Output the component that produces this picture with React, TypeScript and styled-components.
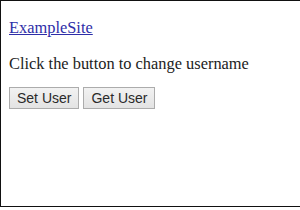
import React from "react";
import styled, { createGlobalStyle } from "styled-components";

const Global = createGlobalStyle`
  html, body { margin: 0; padding: 0; background: #ffffff; }
`;

const Frame = styled.div`
  box-sizing: border-box;
  width: 300px;
  height: 207px;
  border: 1px solid #111111;
  border-right: none;
  padding: 1px 8px 0;
  overflow: hidden;
  font-family: "Liberation Serif", "Times New Roman", serif;
  font-size: 16.4px;
  color: #222222;
  background: #ffffff;
`;

const Para = styled.p<{ $top?: number; $bottom?: number }>`
  margin: ${(p) => p.$top ?? 16}px 0 ${(p) => p.$bottom ?? 16}px;
`;

const Link = styled.a`
  color: #2e2ea8;
  text-decoration: underline;
`;

const Buttons = styled.div`
  display: flex;
  gap: 4px;
`;

const Button = styled.button`
  font-family: "Liberation Sans", Arial, sans-serif;
  font-size: 14px;
  color: #2a2a2a;
  padding: 2px 7px;
  border: 1px solid #acacac;
  border-radius: 0;
  background: linear-gradient(#f2f2f2, #e3e3e3);
  line-height: 16px;
`;

export default function App() {
  return (
    <>
      <Global />
      <Frame>
        <Para>
          <Link href="#">ExampleSite</Link>
        </Para>
        <Para $top={15} $bottom={13}>
          Click the button to change username
        </Para>
        <Buttons>
          <Button>Set User</Button>
          <Button>Get User</Button>
        </Buttons>
      </Frame>
    </>
  );
}
